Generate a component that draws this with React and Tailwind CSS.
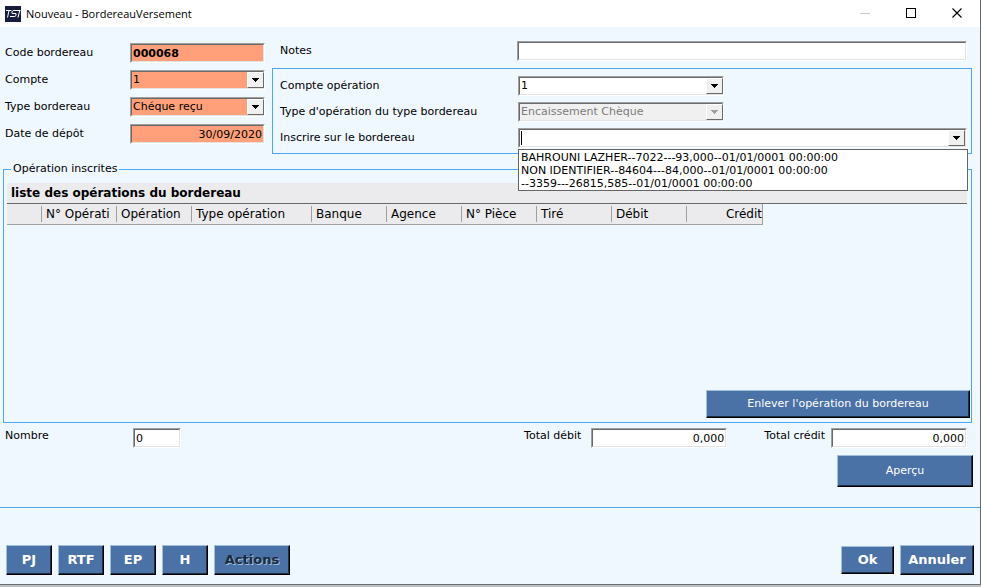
import React, { useState } from "react";

const sunken =
  "border border-t-[#a0a0a0] border-l-[#a0a0a0] border-r-white border-b-white";
const sunkenInner =
  "border border-t-[#696969] border-l-[#696969] border-r-[#e3e3e3] border-b-[#e3e3e3]";

const columns = [
  { label: "", width: "w-[35px]" },
  { label: "N° Opérati", width: "w-[75px]" },
  { label: "Opération", width: "w-[75px]" },
  { label: "Type opération", width: "w-[120px]" },
  { label: "Banque", width: "w-[75px]" },
  { label: "Agence", width: "w-[75px]" },
  { label: "N° Pièce", width: "w-[75px]" },
  { label: "Tiré", width: "w-[75px]" },
  { label: "Débit", width: "w-[75px]" },
  { label: "Crédit", width: "w-[75px]", right: true },
];

const operations = [
  "BAHROUNI LAZHER--7022---93,000--01/01/0001 00:00:00",
  "NON IDENTIFIER--84604---84,000--01/01/0001 00:00:00",
  "--3359---26815,585--01/01/0001 00:00:00",
];

const Arrow = () => (
  <svg width="7" height="4" viewBox="0 0 7 4" fill="currentColor" shapeRendering="crispEdges">
    <path d="M0 0h7v1h-1v1h-1v1h-1v1h-1v-1h-1v-1h-1v-1h-1z" />
  </svg>
);

const arrowBox =
  "flex w-[17px] items-center justify-center border border-t-white border-l-white border-r-[#696969] border-b-[#696969] bg-[#f0f0f0]";

const TextField = ({ id, value, className = "", inputClass = "" }) => (
  <div className={`${sunken} ${className}`}>
    <input
      id={id}
      defaultValue={value}
      className={`block h-[18px] w-full px-px outline-none ${sunkenInner} ${inputClass}`}
    />
  </div>
);

const SelectField = ({ id, options, className = "", inputClass = "bg-white", disabled }) => (
  <div className={`relative ${sunken} ${className}`}>
    <select
      id={id}
      disabled={disabled}
      className={`block h-[18px] w-full appearance-none rounded-none px-px outline-none ${sunkenInner} ${inputClass}`}
    >
      {options.map(option => (
        <option key={option}>{option}</option>
      ))}
    </select>
    <span
      className={`pointer-events-none absolute inset-y-px right-0 ${arrowBox} ${
        disabled ? "text-[#a0a0a0]" : "text-black"
      }`}
    >
      <Arrow />
    </span>
  </div>
);

const Button = ({ children, className = "", ...props }) => (
  <button
    className={`border border-t-[#a0bfdd] border-l-[#a0bfdd] border-r-black border-b-black bg-[#4a72a6] text-white shadow-[inset_-1px_-1px_0_#1c2f4a] ${className}`}
    {...props}
  >
    {children}
  </button>
);

const Combo = ({ id }) => {
  const [open, setOpen] = useState(true);
  const [value, setValue] = useState("");

  return (
    <div className={`relative flex-1 ${sunken}`}>
      <div className={`flex h-[18px] items-stretch bg-white ${sunkenInner}`}>
        {!value && <span className="my-px ml-px w-px bg-black" />}
        <input
          id={id}
          role="combobox"
          aria-expanded={open}
          aria-controls="operations"
          value={value}
          onChange={e => setValue(e.target.value)}
          className="min-w-0 flex-1 px-px outline-none"
        />
        <button aria-label="Ouvrir la liste" onClick={() => setOpen(!open)} className={arrowBox}>
          <Arrow />
        </button>
      </div>
      {open && (
        <ul
          id="operations"
          role="listbox"
          className="absolute top-5 -right-0.5 -left-px z-10 border border-[#646464] bg-white px-0.5 pt-px leading-[13px]"
        >
          {operations.map(item => (
            <li
              key={item}
              role="option"
              aria-selected={value === item}
              onClick={() => {
                setValue(item);
                setOpen(false);
              }}
            >
              {item}
            </li>
          ))}
        </ul>
      )}
    </div>
  );
};

const TitleBar = () => (
  <header className="flex h-[27px] items-center bg-white pl-[5px]">
    <svg width="16" height="16" viewBox="0 0 16 16">
      <rect width="16" height="16" fill="#171c3c" />
      <path
        d="M1 4.5h5.5M4 4.5L2.5 11.5M15.5 4.5H8.2L6.8 6L7.2 7.5H11L11 9.5L9.8 10.5H5M14.8 4.5L13 11.5"
        fill="none"
        stroke="#fff"
      />
    </svg>
    <h1 className="ml-[5px] flex-1 font-['Open_Sans',sans-serif] text-[11px]">
      Nouveau - BordereauVersement
    </h1>
    <button aria-label="Réduire" className="flex h-full w-[46px] items-center justify-center text-[#c8c8c8]">
      <svg width="11" height="11" shapeRendering="crispEdges">
        <path d="M0 5.5h10" stroke="currentColor" />
      </svg>
    </button>
    <button aria-label="Agrandir" className="flex h-full w-[46px] items-center justify-center">
      <svg width="11" height="11" shapeRendering="crispEdges">
        <rect x="0.5" y="0.5" width="9" height="9" fill="none" stroke="currentColor" />
      </svg>
    </button>
    <button aria-label="Fermer" className="flex h-full w-[46px] items-center justify-center">
      <svg width="11" height="11">
        <path d="M0.5 0.5l9 9M9.5 0.5l-9 9" stroke="currentColor" strokeWidth="1.1" />
      </svg>
    </button>
  </header>
);

const App = () => (
  <div className="flex min-h-screen flex-col bg-[#b9c0c6] font-['DejaVu_Sans',Verdana,sans-serif] text-[11px] leading-4 text-black">
    <div className="flex flex-1 flex-col border-r border-b border-[#6b6b6b] bg-[#f0f8ff]">
      <TitleBar />

      <main className="flex flex-1 flex-col">
        <div className="flex">
          {/* Bordereau */}
          <div className="flex w-[272px] flex-col gap-[7px] pt-4 pl-[5px]">
            <div className="flex items-center">
              <label htmlFor="code" className="w-[125px]">Code bordereau</label>
              <TextField id="code" value="000068" className="w-[135px]" inputClass="bg-[#ffa07a] font-bold" />
            </div>
            <div className="flex items-center">
              <label htmlFor="compte" className="w-[125px]">Compte</label>
              <SelectField id="compte" options={["1"]} className="w-[135px]" inputClass="bg-[#ffa07a]" />
            </div>
            <div className="flex items-center">
              <label htmlFor="type" className="w-[125px]">Type bordereau</label>
              <SelectField id="type" options={["Chéque reçu"]} className="w-[135px]" inputClass="bg-[#ffa07a]" />
            </div>
            <div className="flex items-center">
              <label htmlFor="date" className="w-[125px]">Date de dépôt</label>
              <TextField id="date" value="30/09/2020" className="w-[135px]" inputClass="bg-[#ffa07a] text-right" />
            </div>
          </div>

          {/* Opération */}
          <div className="flex-1 pt-[14px] pr-2">
            <div className="flex items-center pr-[5px] pl-2">
              <label htmlFor="notes" className="w-[237px]">Notes</label>
              <TextField id="notes" className="flex-1" inputClass="bg-white" />
            </div>
            <div className="mt-[7px] flex flex-col gap-1.5 border border-[#4ba6f5] pt-[7px] pr-1 pb-[5px] pl-[7px]">
              <div className="flex items-center">
                <label htmlFor="compte-op" className="w-[238px]">Compte opération</label>
                <SelectField id="compte-op" options={["1"]} className="w-[206px]" />
              </div>
              <div className="flex items-center">
                <label htmlFor="type-op" className="w-[238px]">Type d'opération du type bordereau</label>
                <SelectField
                  id="type-op"
                  disabled
                  options={["Encaissement Chèque"]}
                  className="w-[206px]"
                  inputClass="bg-[#f0f0f0] text-[#7c7c7c] opacity-100"
                />
              </div>
              <div className="flex items-center">
                <label htmlFor="inscrire" className="w-[238px]">Inscrire sur le bordereau</label>
                <Combo id="inscrire" />
              </div>
            </div>
          </div>
        </div>

        {/* Opérations inscrites */}
        <fieldset className="mt-[7px] mr-2 ml-[3px] border border-[#4ba6f5] pb-1 pl-[3px]">
          <legend className="ml-1 px-0.5">Opération inscrites</legend>
          <div className="mt-1.5 mr-1 min-h-[207px]">
            <h2 className="border-b border-[#696969] bg-[#ebebee] px-1 text-[12px] leading-5 font-bold">
              liste des opérations du bordereau
            </h2>
            <table className="w-[755px] table-fixed border-separate border-spacing-0 border-r border-b border-[#a0a0a0] bg-[#ebebee] text-[12px] leading-4">
              <thead>
                <tr>
                  {columns.map(col => (
                    <th key={col.label} scope="col" className={`p-0 py-0.5 font-normal ${col.width}`}>
                      <div
                        className={`h-4 overflow-hidden whitespace-nowrap ${
                          col.right ? "text-right" : "border-r border-[#a0a0a0] pl-1 text-left"
                        }`}
                      >
                        {col.label}
                      </div>
                    </th>
                  ))}
                </tr>
              </thead>
            </table>
          </div>
          <div className="mr-px flex justify-end">
            <Button className="h-7 w-[264px]">Enlever l'opération du bordereau</Button>
          </div>
        </fieldset>

        {/* Totaux */}
        <div className="mt-[5px] flex pr-[13px] pl-[5px]">
          <label htmlFor="nombre" className="w-32">Nombre</label>
          <TextField id="nombre" value="0" className="w-12" inputClass="bg-white" />
          <label htmlFor="debit" className="mr-2.5 ml-auto">Total débit</label>
          <TextField id="debit" value="0,000" className="w-[136px]" inputClass="bg-white text-right" />
          <label htmlFor="credit" className="mr-1.5 ml-[37px]">Total crédit</label>
          <TextField id="credit" value="0,000" className="w-[136px]" inputClass="bg-white text-right" />
        </div>
        <div className="mt-[7px] flex justify-end pr-[7px]">
          <Button className="h-8 w-[136px]">Aperçu</Button>
        </div>
      </main>

      <footer className="flex items-center gap-1.5 border-t border-[#4ba6f5] pt-[37px] pr-1.5 pb-[9px] pl-1.5 text-[13px]">
        <Button className="h-[30px] w-[46px] font-bold">PJ</Button>
        <Button className="h-[30px] w-[46px] font-bold">RTF</Button>
        <Button className="h-[30px] w-[46px] font-bold">EP</Button>
        <Button className="h-[30px] w-[46px] font-bold">H</Button>
        <Button disabled className="h-[30px] w-[76px] font-bold">
          <span className="text-[#1c2b40] [text-shadow:1px_1px_0_#a0bfdd]">Actions</span>
        </Button>
        <Button className="ml-auto h-7 w-[53px] font-bold">Ok</Button>
        <Button className="h-[30px] w-[74px] font-bold">Annuler</Button>
      </footer>
    </div>
    <div className="h-0.5" />
  </div>
);

export default App;
